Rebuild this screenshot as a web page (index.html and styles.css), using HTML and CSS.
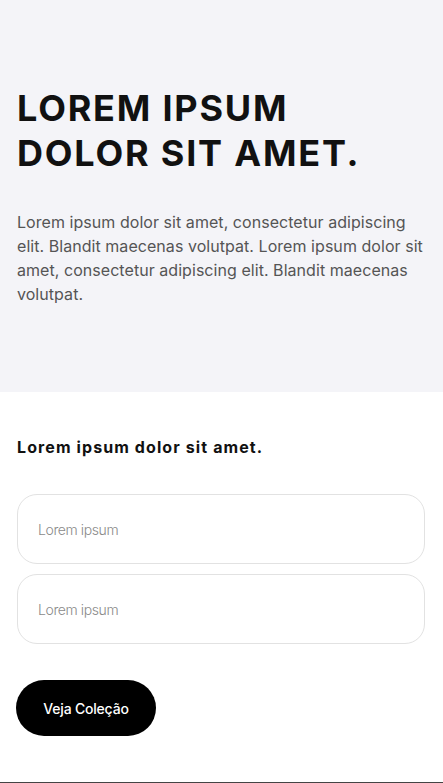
FILE: index.html
```html
<!DOCTYPE html>
<html lang="pt">
<head>
<meta charset="utf-8">
<title>Lorem</title>
<link rel="stylesheet" href="styles.css">
</head>
<body>
<main class="page">
  <section class="hero">
    <h1 class="hero-title">LOREM IPSUM<br>DOLOR SIT AMET.</h1>
    <p class="hero-text">Lorem ipsum dolor sit amet, consectetur adipiscing elit. Blandit maecenas volutpat. Lorem ipsum dolor sit amet, consectetur adipiscing elit. Blandit maecenas volutpat.</p>
  </section>
  <section class="form-section">
    <h2 class="form-title">Lorem ipsum dolor sit amet.</h2>
    <form class="form">
      <input class="field" type="text" placeholder="Lorem ipsum">
      <input class="field" type="text" placeholder="Lorem ipsum">
      <button class="btn" type="button">Veja Coleção</button>
    </form>
  </section>
</main>
</body>
</html>
```
FILE: styles.css
```css
* { box-sizing: border-box; }
html, body { margin: 0; padding: 0; }
body {
  font-family: Inter, "Noto Sans", sans-serif;
  background: #ffffff;
  color: #111;
}
.page {
  height: 783px;
  border-bottom: 1px solid #444;
  display: flex;
  flex-direction: column;
}
.hero {
  background: #f4f4f8;
  height: 392px;
  padding: 86px 17px 0 17px;
}
.hero-title {
  margin: 0;
  font-size: 36px;
  line-height: 45px;
  font-weight: 700;
  letter-spacing: 1.8px;
  color: #111;
}
.hero-text {
  margin: 34px 0 0 0;
  font-size: 16px;
  line-height: 24px;
  color: #555;
  letter-spacing: 0.05px;
}
.form-section {
  padding: 45px 17px 0 17px;
}
.form-title {
  margin: 0;
  font-size: 16px;
  line-height: 20px;
  font-weight: 700;
  letter-spacing: 1.1px;
  color: #111;
}
.form {
  margin-top: 37px;
  display: flex;
  flex-direction: column;
  gap: 10px;
  align-items: flex-start;
}
.field {
  width: 408px;
  height: 70px;
  border: 1px solid #e2e2e2;
  border-radius: 20px;
  padding: 0 20px;
  font-family: inherit;
  font-size: 14px;
  color: #333;
  background: #fff;
  outline: none;
}
.field::placeholder {
  color: #8a8a8a;
  font-weight: 300;
  letter-spacing: -0.4px;
}
.btn {
  margin-top: 26px;
  margin-left: -1px;
  width: 140px;
  height: 56px;
  border: none;
  border-radius: 28px;
  background: #000;
  color: #fff;
  font-family: inherit;
  font-size: 14px;
  font-weight: 500;
  letter-spacing: -0.2px;
  cursor: pointer;
}
```
